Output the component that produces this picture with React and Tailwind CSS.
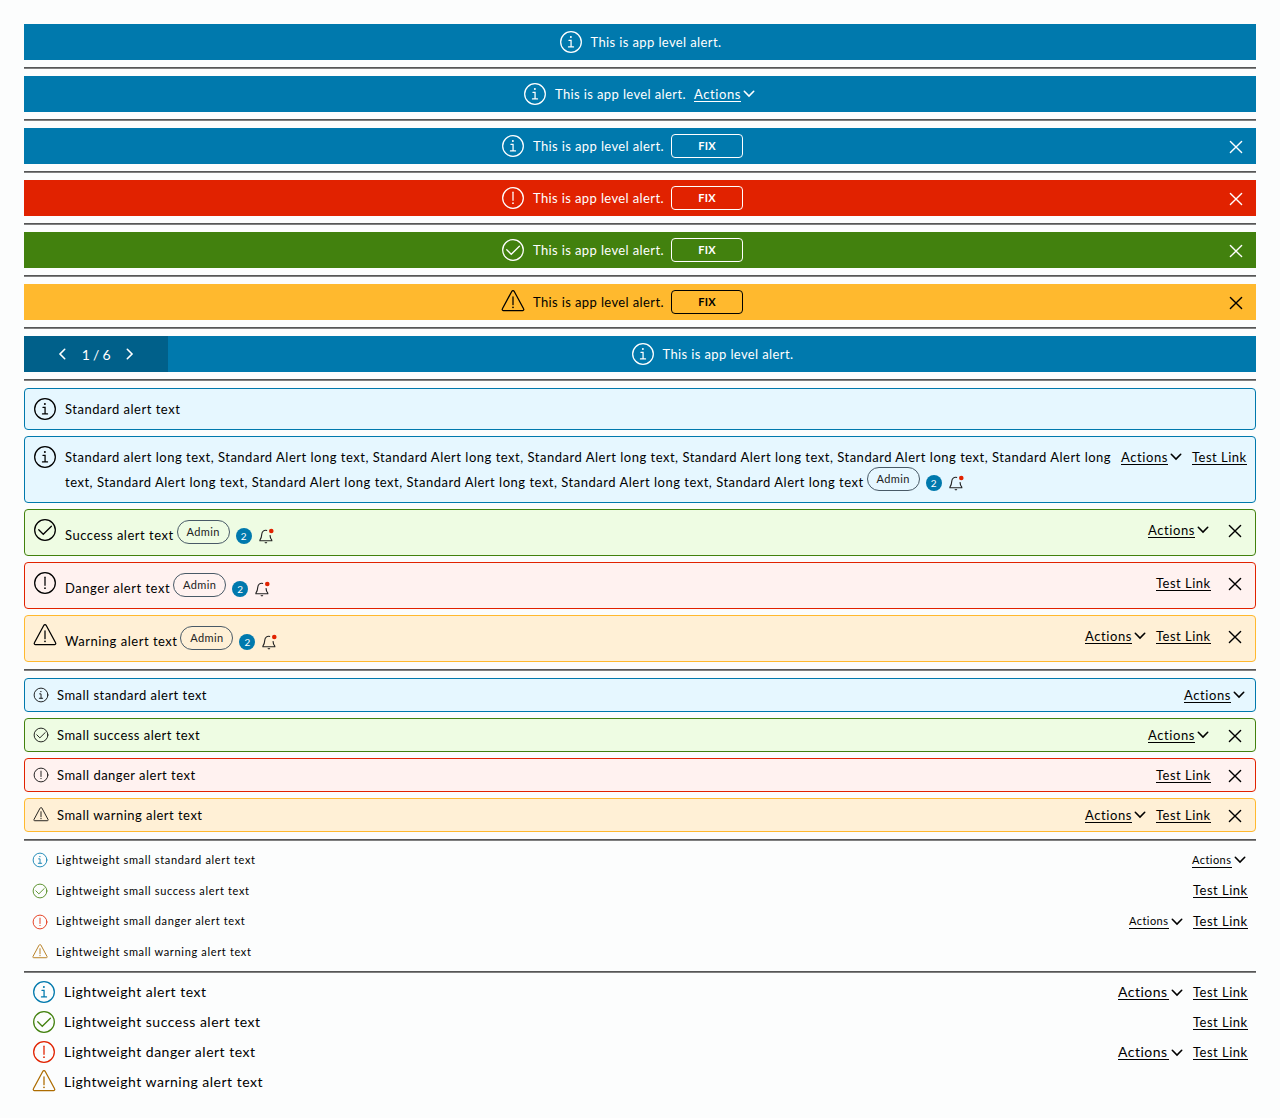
const SHAPES = {
  info: (
    <>
      <circle cx="18" cy="18" r="15.5" />
      <circle cx="17.8" cy="10.4" r="1.5" fill="currentColor" stroke="none" />
      <path d="M14.9 15.4h3.2v9.8M14.2 25.400h7.600" />
    </>
  ),
  danger: (
    <>
      <circle cx="18" cy="18" r="15.5" />
      <path d="M18 9.3v12.2" />
      <circle cx="18" cy="25.8" r="1.3" fill="currentColor" stroke="none" />
    </>
  ),
  success: (
    <>
      <circle cx="18" cy="18" r="15.5" />
      <path d="M8.6 17.6l6.8 6.8 12.2-12" />
    </>
  ),
  warning: (
    <>
      <path d="M16.1 2.2a2.2 2.2 0 0 1 3.8 0l14 26a1.8 1.8 0 0 1-1.6 2.7H3.7a1.8 1.8 0 0 1-1.6-2.7z" />
      <path d="M18 10.5v11.6" />
      <circle cx="18" cy="26" r="1.3" fill="currentColor" stroke="none" />
    </>
  ),
};

function Icon({ kind, className = "size-6" }) {
  return (
    <svg viewBox="0 0 36 36" className={`shrink-0 ${className}`} fill="none" stroke="currentColor" strokeWidth="1.9" strokeLinecap="round">
      {SHAPES[kind]}
    </svg>
  );
}

function Chevron({ className = "" }) {
  return (
    <svg viewBox="0 0 12 8" className={`h-2 w-3 shrink-0 ${className}`} fill="none" stroke="currentColor" strokeWidth="1.6" strokeLinecap="round">
      <path d="M1.3 1.3L6 6l4.7-4.7" />
    </svg>
  );
}

function Close({ className = "" }) {
  return (
    <svg viewBox="0 0 14 14" className={`size-3.5 shrink-0 ${className}`} fill="none" stroke="currentColor" strokeWidth="1.4" strokeLinecap="round">
      <path d="M1.4 1.4l11.2 11.2M12.6 1.4L1.4 12.6" />
    </svg>
  );
}

const LINK_SIZES = {
  sm: "w-10 text-[11px] tracking-[0.45px]",
  md: "w-[47px] text-[13px] tracking-[0.6px]",
  lg: "w-[51px] text-[14px] tracking-[0.5px]",
};

function Actions({ size = "md" }) {
  return (
    <span className="mr-0.5 flex items-center gap-0.5">
      <span className={`whitespace-nowrap border-b border-current leading-[14px] ${LINK_SIZES[size]}`}>Actions</span>
      <Chevron />
    </span>
  );
}

function TestLink() {
  return <span className="w-[55px] whitespace-nowrap border-b border-current text-[13px] leading-[14px] tracking-[0.5px]">Test Link</span>;
}

function Rule() {
  return <hr className="my-[7px] h-0.5 border-t border-b border-t-[#565656] border-b-[#808080]" />;
}

const BANNERS = {
  info: "bg-[#0079ad] text-white",
  danger: "bg-[#e12200] text-white",
  success: "bg-[#42810e] text-white",
  warning: "bg-[#ffb92e] text-black",
};

function AppAlert({ kind = "info", actions, fix, pager }) {
  return (
    <div className={`flex h-9 items-center ${BANNERS[kind]}`}>
      {pager && (
        <div className="flex h-full w-36 items-center justify-center bg-[#00608a]">
          <Chevron className="rotate-90" />
          <span className="mx-[13.5px] w-[29px] whitespace-nowrap text-center text-[14px] tracking-[-0.2px]">1 / 6</span>
          <Chevron className="-rotate-90" />
        </div>
      )}
      <div className="flex flex-1 items-center justify-center">
        <Icon kind={kind} />
        <span className="ml-2 w-[131px] whitespace-nowrap pt-0.5 text-[13px] tracking-[0.38px]">This is app level alert.</span>
        {actions && <span className="ml-2"><Actions /></span>}
        {fix && (
          <span className="ml-[7px] flex h-6 w-[72px] items-center justify-center rounded-[4px] border border-current text-[11px] font-bold tracking-[0.2px]">FIX</span>
        )}
      </div>
      {fix && <div className="flex w-9 pl-[9px] pt-0.5"><Close /></div>}
    </div>
  );
}

const BOXES = {
  info: "border-[#0079ad] bg-[#e6f7ff]",
  danger: "border-[#e12200] bg-[#fff2f0]",
  success: "border-[#42810e] bg-[#eefce3]",
  warning: "border-[#ffb92e] bg-[#fff0d6]",
};

function Bell() {
  return (
    <svg viewBox="0 0 16 16" className="ml-1.5 inline-block size-4 align-[-4px]">
      <path d="M9.1 2.6C6.4 1.5 4 3.3 3.8 6c-.2 2.6-.3 4.2-1.9 6.1v.7h11.9v-.7c-1.3-1.5-1.7-2.9-1.8-5M6.8 14.4q1.1.8 2.2 0" fill="none" stroke="#222" strokeWidth="1.1" />
      <circle cx="13.3" cy="3" r="2.3" fill="#e12200" />
    </svg>
  );
}

function Extras() {
  return (
    <>
      <span className="-my-2 ml-[3px] inline-flex h-6 w-[53px] items-center justify-center rounded-full border border-[#495a67] align-[4px] text-[11px] leading-none tracking-[0.4px] text-[#222]">Admin</span>
      <span className="ml-1.5 inline-flex size-4 items-center justify-center rounded-full bg-[#0079ad] align-[0px] text-[10px] leading-none tracking-normal text-white">2</span>
      <Bell />
    </>
  );
}

function StandardAlert({ kind, className, textTop, actions, link, close, children }) {
  return (
    <div className={`flex items-start rounded-[4px] border pl-2 pr-2 ${BOXES[kind]} ${className}`}>
      <Icon kind={kind} className="mt-2 size-6" />
      <div className={`ml-2 flex-1 whitespace-nowrap text-[13px] leading-[25px] tracking-[0.51px] ${textTop}`}>{children}</div>
      <div className="mt-2 flex h-6 items-center gap-2">
        {actions && <Actions />}
        {link && <TestLink />}
        {close && <Close className="ml-[9px] mr-[5px] mt-px" />}
      </div>
    </div>
  );
}

function SmallAlert({ kind, actions, link, close, children }) {
  return (
    <div className={`flex h-[34px] items-center rounded-[4px] border px-2 ${BOXES[kind]}`}>
      <Icon kind={kind} className="size-4" />
      <div className="ml-2 flex-1 pt-0.5 text-[13px] tracking-[0.48px]">{children}</div>
      <div className="flex items-center gap-2">
        {actions && <Actions />}
        {link && <TestLink />}
        {close && <Close className="ml-[9px] mr-[5px] mt-px" />}
      </div>
    </div>
  );
}

const TINTS = {
  info: "text-[#0079ad]",
  danger: "text-[#e12200]",
  success: "text-[#42810e]",
  warning: "text-[#ad6c00]",
};

function LightAlert({ kind, small, actions, link, children }) {
  return (
    <div className={`flex items-center px-2 ${small ? "h-[30.67px]" : "h-[30px]"}`}>
      <span className={TINTS[kind]}>
        <Icon kind={kind} className={small ? "size-4" : "size-6"} />
      </span>
      <div className={small ? "ml-2 flex-1 text-[11px] tracking-[0.66px]" : "ml-2 flex-1 text-[14px] tracking-[0.5px]"}>{children}</div>
      <div className={`flex items-center gap-2 ${small ? "" : "pt-0.5"}`}>
        {actions && <Actions size={small ? "sm" : "lg"} />}
        {link && <TestLink />}
      </div>
    </div>
  );
}

export default function App() {
  return (
    <main className="min-h-[1118px] bg-[#fcfdfd] p-6 font-['Lato',sans-serif] text-black">
      <AppAlert />
      <Rule />
      <AppAlert actions />
      <Rule />
      <AppAlert fix />
      <Rule />
      <AppAlert kind="danger" fix />
      <Rule />
      <AppAlert kind="success" fix />
      <Rule />
      <AppAlert kind="warning" fix />
      <Rule />
      <AppAlert pager />
      <Rule />
      <div className="flex flex-col gap-1.5">
        <StandardAlert kind="info" className="h-[42px]" textTop="mt-2">Standard alert text</StandardAlert>
        <StandardAlert kind="info" className="h-[67px]" textTop="mt-2" actions link>
          Standard alert long text, Standard Alert long text, Standard Alert long text, Standard Alert long text, Standard Alert long text, Standard Alert long text, Standard Alert long
          <br />
          text, Standard Alert long text, Standard Alert long text, Standard Alert long text, Standard Alert long text, Standard Alert long text
          <Extras />
        </StandardAlert>
        <StandardAlert kind="success" className="h-[47px]" textTop="mt-[13px]" actions close>Success alert text<Extras /></StandardAlert>
        <StandardAlert kind="danger" className="h-[47px]" textTop="mt-[13px]" link close>Danger alert text<Extras /></StandardAlert>
        <StandardAlert kind="warning" className="h-[47px]" textTop="mt-[13px]" actions link close>Warning alert text<Extras /></StandardAlert>
      </div>
      <Rule />
      <div className="flex flex-col gap-1.5">
        <SmallAlert kind="info" actions>Small standard alert text</SmallAlert>
        <SmallAlert kind="success" actions close>Small success alert text</SmallAlert>
        <SmallAlert kind="danger" link close>Small danger alert text</SmallAlert>
        <SmallAlert kind="warning" actions link close>Small warning alert text</SmallAlert>
      </div>
      <Rule />
      <div className="-mt-[3px] -mb-1">
        <LightAlert kind="info" small actions>Lightweight small standard alert text</LightAlert>
        <LightAlert kind="success" small link>Lightweight small success alert text</LightAlert>
        <LightAlert kind="danger" small actions link>Lightweight small danger alert text</LightAlert>
        <LightAlert kind="warning" small>Lightweight small warning alert text</LightAlert>
      </div>
      <Rule />
      <div className="-mt-[3px]">
        <LightAlert kind="info" actions link>Lightweight alert text</LightAlert>
        <LightAlert kind="success" link>Lightweight success alert text</LightAlert>
        <LightAlert kind="danger" actions link>Lightweight danger alert text</LightAlert>
        <LightAlert kind="warning">Lightweight warning alert text</LightAlert>
      </div>
    </main>
  );
}
